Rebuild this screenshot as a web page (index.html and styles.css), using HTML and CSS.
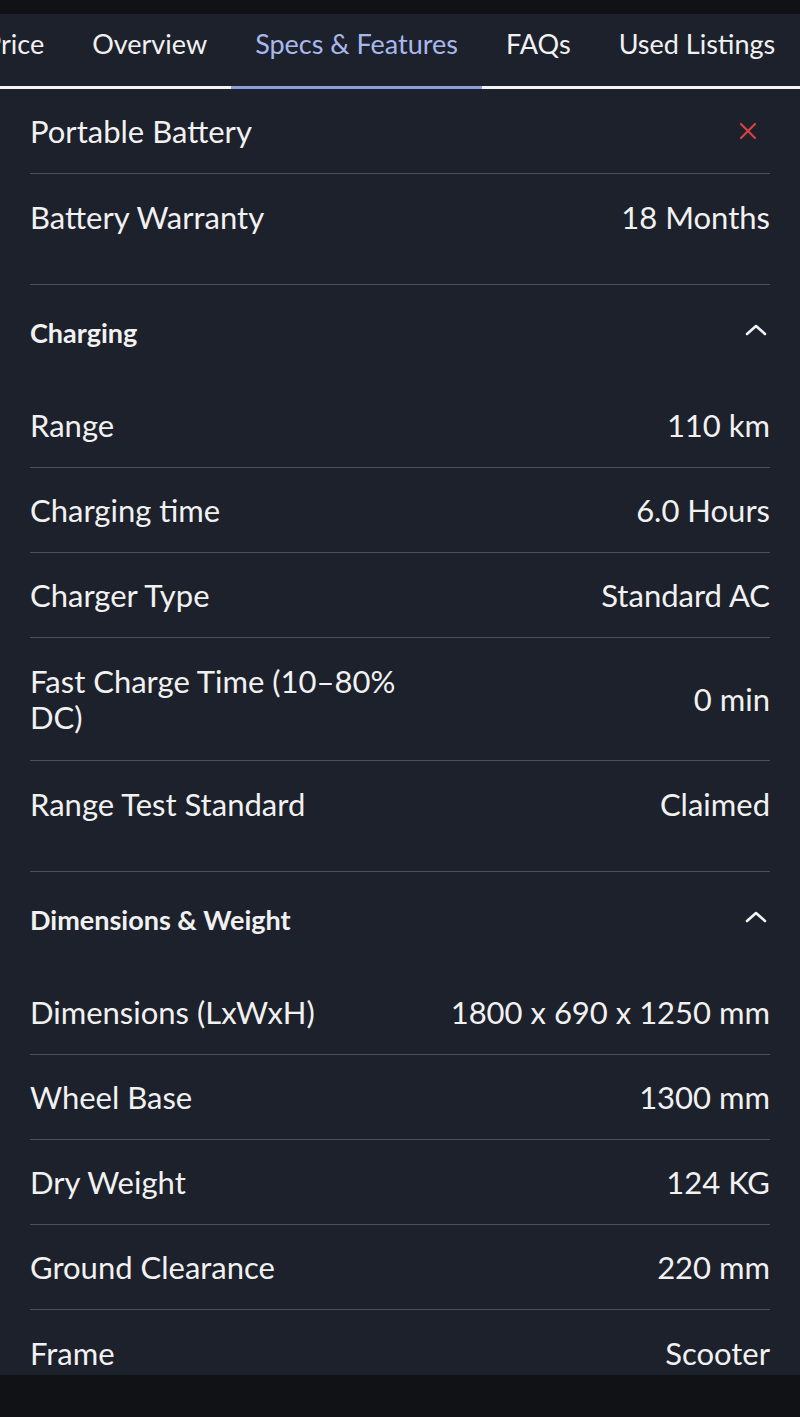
FILE: index.html
```html
<!DOCTYPE html>
<html lang="en">
  <head>
    <meta charset="UTF-8" />
    <title>Specs &amp; Features</title>
    <link rel="stylesheet" href="styles.css">
  </head>
  <body>
    <div class="page">
      <nav class="tabs">
        <div class="tab-list">
          <a class="tab">Price</a>
          <a class="tab">Overview</a>
          <a class="tab active">Specs &amp; Features</a>
          <a class="tab">FAQs</a>
          <a class="tab">Used Listings</a>
        </div>
      </nav>

      <div class="specs">
        <div class="group">
          <div class="row">
            <span class="label">Portable Battery</span>
            <span class="value">
              <svg class="cross" width="20" height="20" viewBox="0 0 20 20">
                <path d="M3 3 L17 17 M17 3 L3 17" stroke="#d5423f" stroke-width="2.2" stroke-linecap="round" fill="none" />
              </svg>
            </span>
          </div>
          <div class="row">
            <span class="label">Battery Warranty</span>
            <span class="value">18 Months</span>
          </div>
        </div>

        <div class="group">
          <div class="group-head">
            <span>Charging</span>
            <svg class="chevron" width="22" height="14" viewBox="0 0 22 14">
              <path d="M2 11 L11 3 L20 11" stroke="#f2f2f2" stroke-width="2.6" stroke-linecap="round" stroke-linejoin="round" fill="none" />
            </svg>
          </div>
          <div class="row">
            <span class="label">Range</span>
            <span class="value">110 km</span>
          </div>
          <div class="row">
            <span class="label">Charging time</span>
            <span class="value">6.0 Hours</span>
          </div>
          <div class="row">
            <span class="label">Charger Type</span>
            <span class="value">Standard AC</span>
          </div>
          <div class="row tall">
            <span class="label narrow">Fast Charge Time (10–80% DC)</span>
            <span class="value">0 min</span>
          </div>
          <div class="row">
            <span class="label">Range Test Standard</span>
            <span class="value">Claimed</span>
          </div>
        </div>

        <div class="group">
          <div class="group-head">
            <span>Dimensions &amp; Weight</span>
            <svg class="chevron" width="22" height="14" viewBox="0 0 22 14">
              <path d="M2 11 L11 3 L20 11" stroke="#f2f2f2" stroke-width="2.6" stroke-linecap="round" stroke-linejoin="round" fill="none" />
            </svg>
          </div>
          <div class="row">
            <span class="label">Dimensions (LxWxH)</span>
            <span class="value">1800 x 690 x 1250 mm</span>
          </div>
          <div class="row">
            <span class="label">Wheel Base</span>
            <span class="value">1300 mm</span>
          </div>
          <div class="row">
            <span class="label">Dry Weight</span>
            <span class="value">124 KG</span>
          </div>
          <div class="row">
            <span class="label">Ground Clearance</span>
            <span class="value">220 mm</span>
          </div>
          <div class="row">
            <span class="label">Frame</span>
            <span class="value">Scooter</span>
          </div>
        </div>
      </div>
    </div>
    <div class="bottom-bar"></div>
  </body>
</html>
```

FILE: styles.css
```css
html,
body {
  margin: 0;
  height: 100%;
}
body {
  font-family: "Lato", "Liberation Sans", sans-serif;
  background-color: #111215;
  color: #f1f1f1;
  display: flex;
  flex-direction: column;
  overflow: hidden;
  padding-top: 14px;
  box-sizing: border-box;
}
.page {
  flex: 1;
  background-color: #1d212c;
  overflow: hidden;
}
.bottom-bar {
  height: 42px;
  background-color: #111215;
}

/* tab strip */
.tabs {
  height: 72px;
  border-bottom: 3px solid #f4f4f4;
  position: relative;
}
.tab-list {
  display: flex;
  margin-left: -39px;
  height: 100%;
}
.tab {
  padding: 0 24px 14px;
  font-size: 27px;
  color: #f1f1f1;
  display: flex;
  align-items: center;
  white-space: nowrap;
  position: relative;
}
.tab.active {
  color: #a9b8ec;
}
.tab.active::after {
  content: "";
  position: absolute;
  left: 0;
  right: 0;
  bottom: -3px;
  height: 3px;
  background-color: #8d9fdc;
}

/* spec list */
.specs {
  padding: 0 30px;
}
.group {
  border-bottom: 1px solid #4b4f5a;
  padding-bottom: 25px;
}
.group-head {
  height: 98px;
  display: flex;
  align-items: center;
  justify-content: space-between;
  font-size: 27px;
  font-weight: bold;
  padding-bottom: 4px;
  box-sizing: border-box;
}
.chevron {
  margin-right: 3px;
  margin-top: -4px;
}
.row {
  height: 85px;
  display: flex;
  align-items: center;
  justify-content: space-between;
  font-size: 31px;
  border-bottom: 1px solid #4b4f5a;
  box-sizing: border-box;
}
.row.tall {
  height: 123px;
}
.row:last-child {
  border-bottom: none;
}
.label.narrow {
  width: 400px;
  line-height: 36px;
}
.value {
  text-align: right;
}
.cross {
  margin-right: 12px;
  display: block;
}
```
